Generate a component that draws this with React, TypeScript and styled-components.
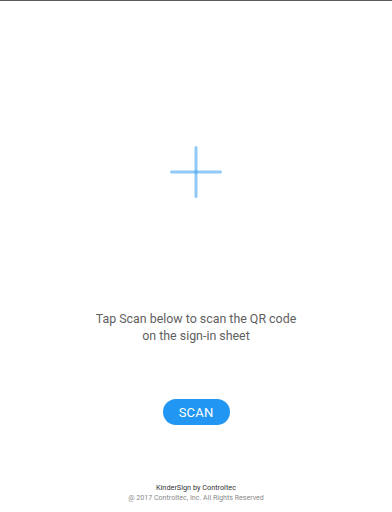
import React from 'react';
import styled, { createGlobalStyle } from 'styled-components';

const GlobalStyle = createGlobalStyle`
    html, body {
        margin: 0;
        padding: 0;
        background: #fff;
    }
    body {
        font-family: Roboto, 'Noto Sans', sans-serif;
    }
`;

const Screen = styled.div`
    align-items: center;
    background: #fff;
    border-top: 1px solid #5a5a5a;
    box-sizing: border-box;
    display: flex;
    flex-direction: column;
    height: 512px;
    width: 392px;
`;

const PlusMark = styled.div`
    height: 52px;
    margin-top: 145px;
    width: 52px;

    svg {
        display: block;
    }
`;

const Message = styled.p`
    color: #5f5f5f;
    font-family: Roboto, sans-serif;
    font-size: 12.4px;
    line-height: 17px;
    margin: 112px 0 0;
    text-align: center;
`;

const ScanButton = styled.button`
    background: #2196f3;
    border: none;
    border-radius: 13px;
    color: #fff;
    font-family: Roboto, sans-serif;
    font-size: 13px;
    height: 26px;
    letter-spacing: 0.2px;
    margin-top: 55px;
    padding: 0;
    width: 67px;
`;

const Footer = styled.div`
    align-items: center;
    display: flex;
    flex-direction: column;
    font-family: Roboto, sans-serif;
    margin-top: 58px;
`;

const FooterLine = styled.div<{ muted?: boolean }>`
    color: ${(props) => (props.muted ? '#8a8a8a' : '#333')};
    font-size: ${(props) => (props.muted ? '7.1px' : '7.3px')};
    line-height: 10px;
`;

const App = () => {
    return (
        <Screen>
            <GlobalStyle />
            <PlusMark>
                <svg width="52" height="52" viewBox="0 0 52 52">
                    <g stroke="#2196f3" strokeOpacity="0.5" strokeWidth="3" strokeLinecap="round">
                        <line x1="1.5" y1="26" x2="50.5" y2="26" />
                        <line x1="26" y1="1.5" x2="26" y2="50.5" />
                    </g>
                </svg>
            </PlusMark>
            <Message>
                Tap Scan below to scan the QR code
                <br />
                on the sign-in sheet
            </Message>
            <ScanButton>SCAN</ScanButton>
            <Footer>
                <FooterLine>KinderSign by Controltec</FooterLine>
                <FooterLine muted>@ 2017 Controltec, Inc. All Rights Reserved</FooterLine>
            </Footer>
        </Screen>
    );
};

export default App;
